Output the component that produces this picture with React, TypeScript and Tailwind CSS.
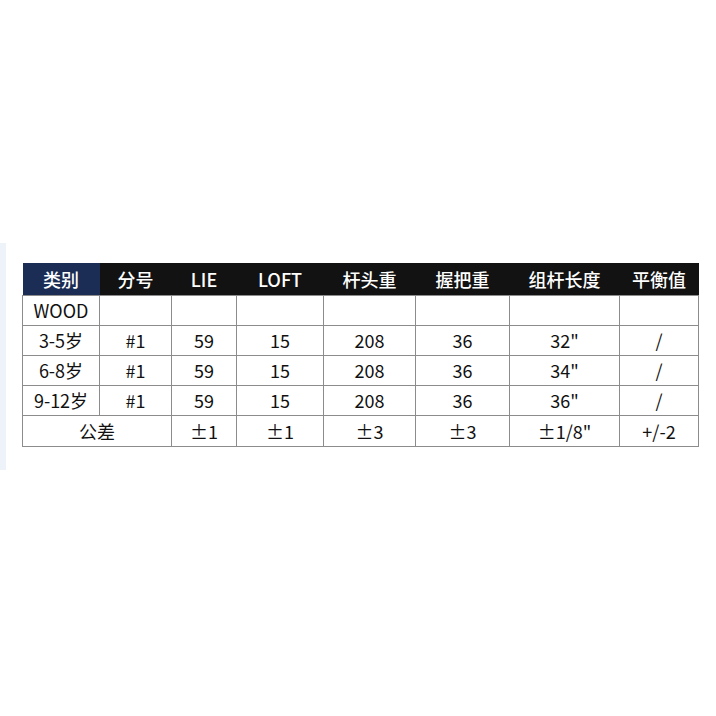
import React from "react";

const widths = [77, 72, 65, 87, 92, 94, 110, 79];
const headers = ["类别", "分号", "LIE", "LOFT", "杆头重", "握把重", "组杆长度", "平衡值"];

const rows = [
  ["WOOD", "", "", "", "", "", "", ""],
  ["3-5岁", "#1", "59", "15", "208", "36", "32\"", "/"],
  ["6-8岁", "#1", "59", "15", "208", "36", "34\"", "/"],
  ["9-12岁", "#1", "59", "15", "208", "36", "36\"", "/"],
];

const tolerance = ["±1", "±1", "±3", "±3", "±1/8\"", "+/-2"];

const cell = "border border-[#8c8c8c] p-0 text-center align-middle leading-none";

const App = () => {
  return (
    <div
      className="h-[716px] w-[716px] overflow-hidden bg-white pt-[243px]"
      style={{ fontFamily: '"Noto Sans CJK SC", "Noto Sans", sans-serif' }}
    >
      <div className="flex items-start">
        {/* left edge strip */}
        <div className="h-[227px] w-[6px] bg-[#eef3f9]"></div>

        {/* spec table */}
        <table className="ml-[16px] mt-[20px] table-fixed border-collapse text-[18px] text-[#111]">
          <colgroup>
            {widths.map((w, i) => (
              <col key={i} style={{ width: w }} />
            ))}
          </colgroup>
          <thead>
            <tr className="h-[32px]">
              {headers.map((h, i) => (
                <th
                  key={i}
                  className={`p-0 text-center align-middle text-[18px] font-medium leading-none text-white ${
                    i === 0 ? "bg-[#1b2d55]" : "bg-[#121212]"
                  }`}
                >
                  {h}
                </th>
              ))}
            </tr>
          </thead>
          <tbody>
            {rows.map((r, ri) => (
              <tr key={ri} className="h-[30px]">
                {r.map((c, ci) => (
                  <td key={ci} className={cell}>
                    {c}
                  </td>
                ))}
              </tr>
            ))}
            <tr className="h-[31px]">
              <td colSpan={2} className={cell}>
                公差
              </td>
              {tolerance.map((t, i) => (
                <td key={i} className={cell}>
                  {t}
                </td>
              ))}
            </tr>
          </tbody>
        </table>
      </div>
    </div>
  );
};

export default App;
